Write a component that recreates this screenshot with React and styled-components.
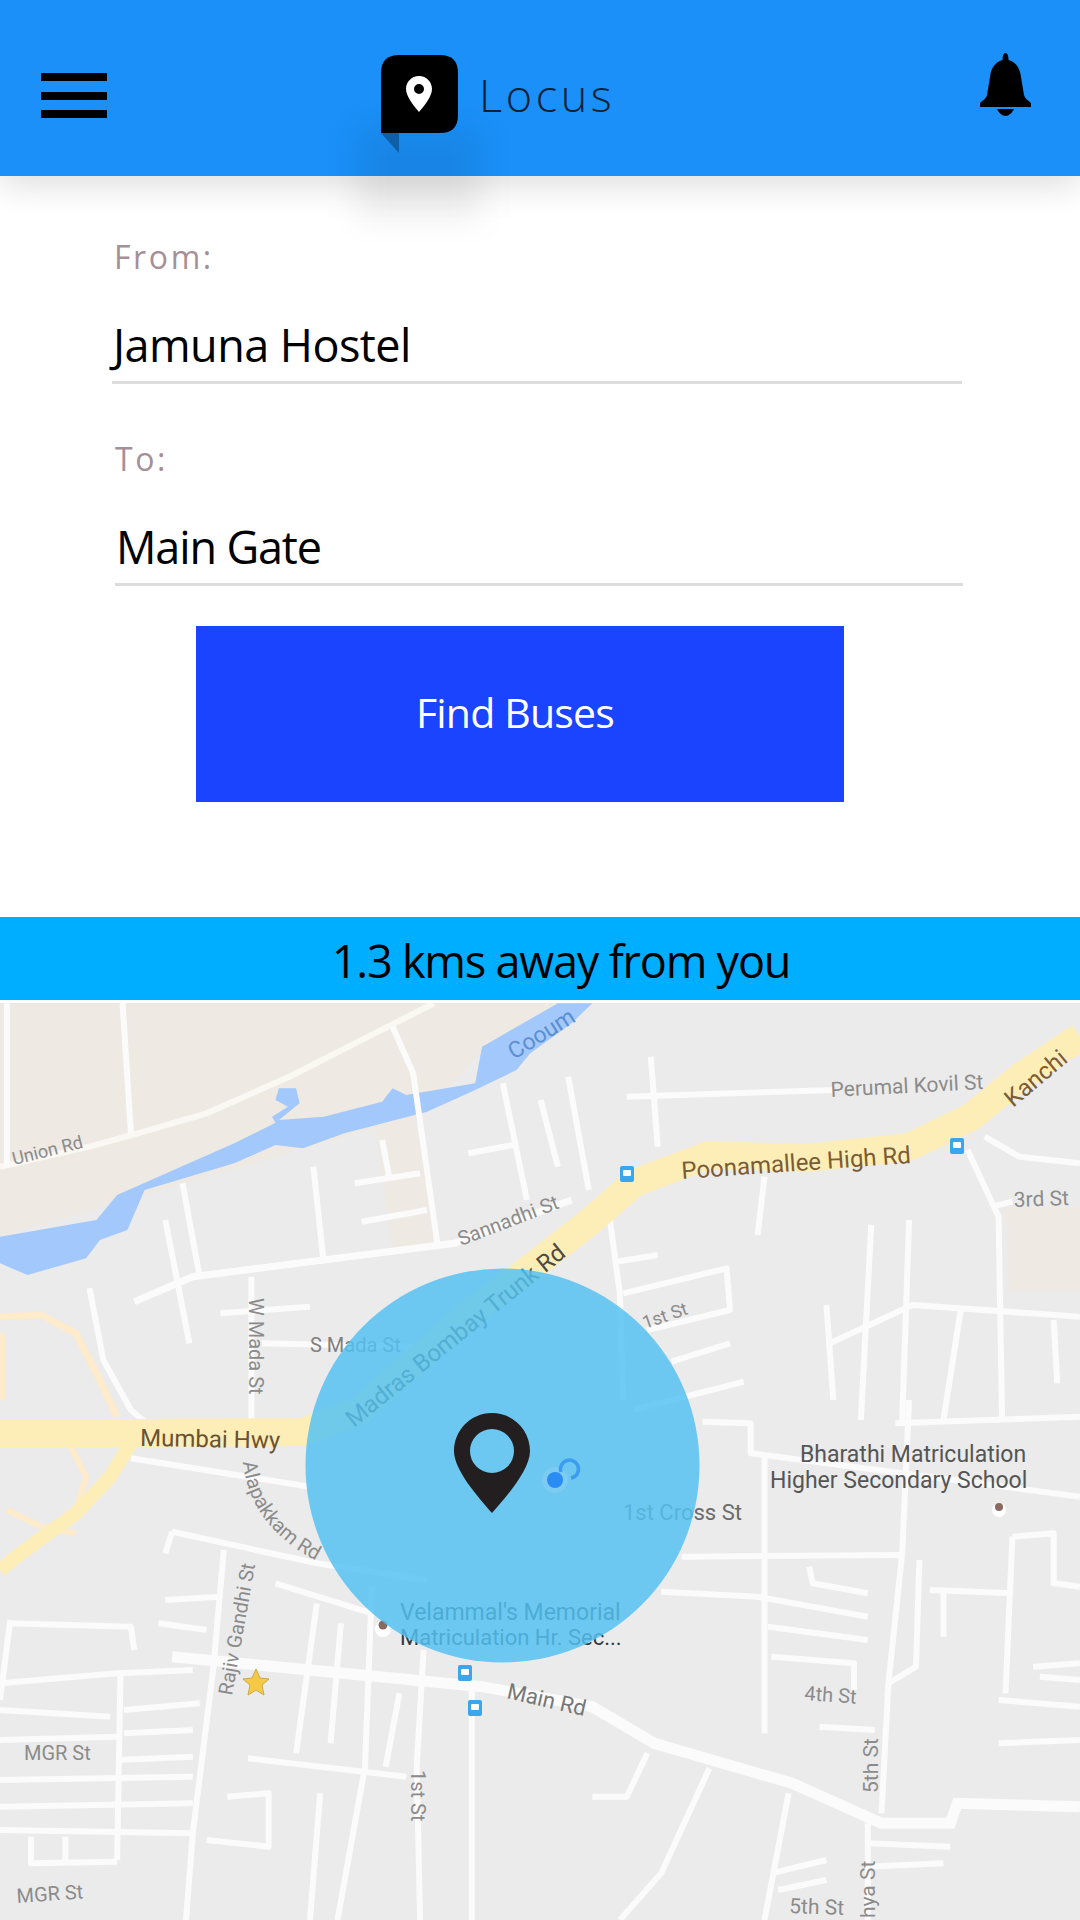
import React from 'react';
import styled, { createGlobalStyle } from 'styled-components';

const GlobalStyle = createGlobalStyle`
  html, body { margin: 0; padding: 0; background: #fff; }
  * { box-sizing: border-box; }
`;

const Page = styled.div`
  width: 1080px;
  height: 1920px;
  overflow: hidden;
  display: flex;
  flex-direction: column;
  background: #fff;
  font-family: "Open Sans", "Noto Sans", sans-serif;
`;

const Header = styled.header`
  position: relative;
  flex: none;
  height: 176px;
  padding: 55px 49px 0 41px;
  display: flex;
  align-items: flex-start;
  background: #1a90f8;
  box-shadow: 0 8px 34px rgba(0, 0, 0, 0.14);
  z-index: 2;
`;

const Burger = styled.div`
  width: 66px;
  margin: 18px 274px 0 0;
  display: flex;
  flex-direction: column;
  gap: 10.5px;
`;

const BurgerBar = styled.span`
  display: block;
  height: 8px;
  background: #000;
`;

const Brand = styled.div`
  position: relative;
  display: flex;
  align-items: flex-start;
  gap: 21px;
`;

const BrandShadow = styled.div`
  position: absolute;
  left: -24px;
  top: 72px;
  width: 124px;
  height: 90px;
  background: rgba(0, 0, 0, 0.07);
  filter: blur(16px);
`;

const BrandMark = styled.svg`
  position: relative;
  display: block;
  flex: none;
`;

const BrandName = styled.span`
  font-size: 45px;
  line-height: 60px;
  margin-top: 10px;
  font-weight: 300;
  letter-spacing: 3.6px;
  color: #0f2138;
`;

const Bell = styled.svg`
  display: block;
  margin: -2px 0 0 auto;
`;

const Form = styled.section`
  flex: none;
  height: 741px;
  padding-top: 59px;
  display: flex;
  flex-direction: column;
`;

const Field = styled.div`
  width: ${(p) => p.$width}px;
  margin: 0 0 ${(p) => p.$gap}px ${(p) => p.$left}px;
  height: ${(p) => p.$height}px;
  border-bottom: 3px solid #dcdcdc;
`;

const Label = styled.div`
  font-size: 32px;
  line-height: 44px;
  letter-spacing: 2.6px;
  color: #a78f97;
  padding-left: ${(p) => p.$pad}px;
`;

const Value = styled.div`
  margin-top: 36px;
  font-size: 45px;
  line-height: 60px;
  letter-spacing: ${(p) => p.$spacing}px;
  color: #000;
  padding-left: ${(p) => p.$pad}px;
`;

const FindButton = styled.button`
  width: 648px;
  height: 176px;
  margin-left: 196px;
  padding: 0 10px 5px 0;
  border: 0;
  border-radius: 0;
  background: #1a44ff;
  color: #fff;
  font-family: inherit;
  font-size: 41px;
  letter-spacing: -0.8px;
`;

const Banner = styled.div`
  flex: none;
  height: 83px;
  margin-bottom: 3px;
  padding: 4px 0 0 42px;
  display: flex;
  align-items: center;
  justify-content: center;
  background: #00aeff;
  color: #000;
  font-size: 45px;
  letter-spacing: -1.2px;
`;

const MapFrame = styled.div`
  flex: 1;
  min-height: 0;
`;

const MapSvg = styled.svg`
  display: block;
  font-family: Roboto, "Liberation Sans", sans-serif;
`;

// points were read off two crops, x is stretched by 1.452 and y by 3
const toPath = (pts, y0) =>
  'M' + pts.map(([x, y]) => `${(x / 1.452).toFixed(1)} ${(y0 + y / 3).toFixed(1)}`).join(' L');

const ROADS_TOP = [
  [[178, 310], [190, 700]],
  [[10, 310], [10, 800]],
  [[570, 380], [600, 520], [635, 1030]],
  [[945, 470], [955, 740]],
  [[910, 590], [1210, 570]],
  [[825, 530], [855, 870]],
  [[730, 550], [765, 900]],
  [[785, 600], [810, 800]],
  [[680, 760], [745, 735]],
  [[555, 720], [565, 830]],
  [[515, 850], [610, 820]],
  [[455, 800], [470, 1090]],
  [[525, 965], [620, 930]],
  [[265, 850], [290, 1130]],
  [[240, 960], [275, 1330]],
  [[365, 1130], [365, 1560]],
  [[130, 1165], [150, 1380], [190, 1530], [230, 1600]],
  [[320, 1240], [450, 1220]],
  [[380, 1330], [600, 1340]],
  [[885, 950], [900, 1180], [905, 1500]],
  [[1110, 830], [1100, 1005]],
  [[895, 1085], [955, 1065]],
  [[905, 1180], [1055, 1105], [1060, 1230], [940, 1290]],
  [[975, 1385], [1060, 1330]],
  [[920, 1530], [1080, 1445]],
  [[1430, 710], [1480, 770], [1568, 790]],
  [[1405, 750], [1450, 950], [1455, 1560]],
  [[1440, 920], [1470, 905]],
  [[1265, 975], [1250, 1560]],
  [[1320, 960], [1310, 1560]],
  [[1200, 1215], [1210, 1500]],
  [[1205, 1330], [1325, 1215], [1568, 1250]],
  [[1395, 1230], [1370, 1560]],
  [[1530, 1260], [1535, 1450]],
];

const ROADS_BOTTOM = [
  [[190, 175], [450, 260]],
  [[250, 395], [240, 460]],
  [[250, 395], [460, 490], [620, 540]],
  [[400, 550], [540, 640]],
  [[325, 450], [310, 800], [280, 1300], [270, 1560]],
  [[240, 600], [320, 590]],
  [[230, 670], [300, 690]],
  [[685, 850], [685, 1560]],
  [[615, 750], [605, 1100], [610, 1560]],
  [[540, 560], [530, 1100], [490, 1560]],
  [[460, 610], [430, 1060]],
  [[495, 670], [480, 1030]],
  [[0, 850], [170, 820], [280, 810]],
  [[175, 820], [170, 1380]],
  [[10, 670], [190, 680], [195, 750]],
  [[15, 660], [0, 900]],
  [[180, 930], [290, 910]],
  [[180, 1000], [280, 990]],
  [[170, 1080], [280, 1070]],
  [[0, 1140], [280, 1130]],
  [[0, 1290], [280, 1300]],
  [[0, 1220], [280, 1210]],
  [[0, 1020], [170, 1010]],
  [[0, 930], [160, 950]],
  [[45, 1310], [45, 1390], [170, 1385]],
  [[95, 1310], [95, 1390]],
  [[360, 1075], [590, 1130]],
  [[330, 1190], [390, 1180], [390, 1340], [300, 1320]],
  [[465, 1180], [450, 1560]],
  [[580, 880], [560, 1100]],
  [[940, 1060], [910, 1190], [860, 1190]],
  [[1030, 1105], [960, 1420], [900, 1560]],
  [[1145, 1180], [1110, 1560]],
  [[1020, 65], [1090, 70], [1090, 160], [1568, 290]],
  [[1300, 70], [1568, 50]],
  [[990, 470], [1310, 465]],
  [[960, 575], [1100, 590], [1260, 650]],
  [[1110, 170], [1110, 1000]],
  [[1120, 770], [1240, 790], [1240, 870]],
  [[1115, 680], [1260, 720]],
  [[1175, 500], [1180, 550], [1260, 580]],
  [[1320, 0], [1310, 460], [1290, 850], [1280, 1240]],
  [[1335, 480], [1330, 800], [1290, 850]],
  [[1350, 570], [1470, 580]],
  [[1470, 410], [1530, 400], [1530, 550], [1568, 560]],
  [[1470, 410], [1460, 880]],
  [[1370, 570], [1370, 710]],
  [[1450, 900], [1568, 920]],
  [[1500, 800], [1568, 790]],
  [[1510, 830], [1568, 840]],
  [[1450, 1030], [1568, 1020]],
  [[1190, 980], [1270, 990]],
  [[1260, 1270], [1260, 1560]],
  [[1260, 1330], [1380, 1340]],
  [[1260, 1400], [1370, 1390]],
  [[1120, 1420], [1200, 1380]],
  [[1130, 1470], [1200, 1440]],
];

const LABELS = [
  { t: 'Union Rd', x: 14, y: 1165, r: -14, s: 18, c: '#8b8b8b' },
  { t: 'Cooum', x: 514, y: 1060, r: -32, s: 23, c: '#5b8fd2' },
  { t: 'Perumal Kovil St', x: 831, y: 1097, r: -3, s: 21, c: '#8b8b8b' },
  { t: 'Kanchi', x: 1013, y: 1108, r: -40, s: 24, c: '#7a5c36' },
  { t: 'Poonamallee High Rd', x: 682, y: 1179, r: -4, s: 24, c: '#7a5c36' },
  { t: 'Sannadhi St', x: 461, y: 1246, r: -21, s: 20, c: '#8b8b8b' },
  { t: '3rd St', x: 1014, y: 1207, r: -2, s: 21, c: '#8b8b8b' },
  { t: 'Madras Bombay Trunk Rd', x: 354, y: 1428, r: -39, s: 24, c: '#4c4b42' },
  { t: 'S Mada St', x: 310, y: 1352, r: 0, s: 20, c: '#808080' },
  { t: 'W Mada St', x: 249, y: 1298, r: 90, s: 20, c: '#8b8b8b' },
  { t: '1st St', x: 645, y: 1329, r: -19, s: 18, c: '#8b8b8b' },
  { t: 'Mumbai Hwy', x: 140, y: 1446, r: 1, s: 24, c: '#6b5232' },
  { t: 'Rajiv Gandhi St', x: 232, y: 1696, r: -80, s: 20, c: '#8b8b8b' },
  { t: '1st Cross St', x: 623, y: 1520, r: 0, s: 22, c: '#6a6a6a' },
  { t: 'Bharathi Matriculation', x: 800, y: 1462, r: 0, s: 23, c: '#555' },
  { t: 'Higher Secondary School', x: 770, y: 1488, r: 0, s: 23, c: '#555' },
  { t: "Velammal's Memorial", x: 400, y: 1620, r: 0, s: 23, c: '#2f3a42' },
  { t: 'Matriculation Hr. Sec...', x: 400, y: 1645, r: 0, s: 22, c: '#2f3a42' },
  { t: 'Main Rd', x: 506, y: 1698, r: 13, s: 22, c: '#777' },
  { t: '4th St', x: 804, y: 1700, r: 4, s: 20, c: '#8b8b8b' },
  { t: 'MGR St', x: 24, y: 1760, r: 0, s: 20, c: '#8b8b8b' },
  { t: 'MGR St', x: 17, y: 1903, r: -4, s: 20, c: '#8b8b8b' },
  { t: '1st St', x: 411, y: 1770, r: 90, s: 20, c: '#8b8b8b' },
  { t: '5th St', x: 878, y: 1793, r: -90, s: 21, c: '#8b8b8b' },
  { t: '5th St', x: 789, y: 1913, r: 2, s: 21, c: '#8b8b8b' },
  { t: 'hya St', x: 875, y: 1918, r: -90, s: 21, c: '#8b8b8b' },
];

const BUS_STOPS = [[627, 1174], [957, 1146], [465, 1673], [475, 1708]];

const Roads = ({ list, y0 }) =>
  list.map((pts, i) => (
    <path key={i} d={toPath(pts, y0)} fill="none" stroke="#fbfbfb" strokeWidth="6" strokeLinejoin="round" />
  ));

const BusStop = ({ x, y }) => (
  <g>
    <rect x={x - 7} y={y - 8} width="14" height="16" rx="2" fill="#39a6ee" />
    <rect x={x - 4} y={y - 4} width="8" height="6" rx="1" fill="#fff" />
  </g>
);

const MapView = () => (
  <MapSvg width="1080" height="917" viewBox="0 1003 1080 917">
    <rect x="0" y="1003" width="1080" height="917" fill="#ebebeb" />

    <path d={toPath([[0, 310], [860, 310], [700, 450], [620, 640], [0, 1010]], 900)} fill="#eee9e3" />
    <path d={toPath([[600, 640], [640, 1030], [570, 1050], [545, 690]], 900)} fill="#eee9e3" />
    <path d={toPath([[1460, 920], [1568, 920], [1568, 1170], [1465, 1170]], 900)} fill="#eee9e3" />

    <path
      d={toPath([[810, 310], [860, 310], [830, 370], [770, 460], [750, 510], [690, 570], [620, 635], [500, 700], [440, 745], [400, 735], [340, 790], [210, 870], [185, 990], [145, 1020], [125, 1075], [40, 1125], [0, 1090], [0, 1010], [140, 960], [170, 885], [340, 730], [400, 668], [395, 650], [418, 620], [400, 600], [405, 565], [430, 565], [435, 610], [405, 660], [470, 650], [555, 605], [570, 565], [590, 585], [690, 550], [700, 440]], 900)}
      fill="#a3c8fb"
    />

    <path d={toPath([[0, 800], [130, 740], [200, 700], [300, 640], [420, 530], [630, 310]], 900)} fill="none" stroke="#faf8f2" strokeWidth="6" />
    <Roads list={ROADS_TOP} y0={900} />
    <Roads list={ROADS_BOTTOM} y0={1400} />
    <path d={toPath([[195, 1205], [280, 1130], [660, 1030], [830, 900]], 900)} fill="none" stroke="#fbfbfb" strokeWidth="7" />
    <path d={toPath([[250, 770], [600, 840], [700, 860], [860, 920], [950, 1030], [1150, 1150], [1280, 1270], [1380, 1270], [1390, 1210], [1568, 1220]], 1400)} fill="none" stroke="#fbfbfb" strokeWidth="11" />

    <path d={toPath([[0, 1250], [60, 1245], [110, 1300], [140, 1420], [170, 1550]], 900)} fill="none" stroke="#fdebcb" strokeWidth="7" />
    <path d={toPath([[0, 1500], [0, 1300]], 900)} fill="none" stroke="#fdebcb" strokeWidth="10" />
    <path d={toPath([[100, 130], [125, 230], [110, 330]], 1400)} fill="none" stroke="#fdebcb" strokeWidth="6" />
    <path d={toPath([[10, 330], [60, 380], [110, 400]], 1400)} fill="none" stroke="#fdebcb" strokeWidth="6" />
    <path d={toPath([[190, 130], [160, 230], [110, 340], [30, 460], [0, 510]], 1400)} fill="none" stroke="#fdeeb8" strokeWidth="14" />
    <path
      d="M1080 1037 L1020 1077 L971 1117 L909 1147 L806 1158 L709 1155 L634 1183 L592 1220 L537 1263 L470 1313 L413 1363 L360 1410 L303 1432 L138 1433 L0 1433"
      fill="none"
      stroke="#fdeeb8"
      strokeWidth="28"
      strokeLinejoin="round"
    />

    {LABELS.map((l, i) => (
      <text key={i} x={l.x} y={l.y} fontSize={l.s} fill={l.c} transform={`rotate(${l.r} ${l.x} ${l.y})`}>
        {l.t}
      </text>
    ))}
    <path id="alapakkam" d="M243 1462 Q250 1530 325 1565" fill="none" />
    <text fontSize="20" fill="#8b8b8b">
      <textPath href="#alapakkam">Alapakkam Rd</textPath>
    </text>

    {BUS_STOPS.map(([x, y]) => (
      <BusStop key={`${x}-${y}`} x={x} y={y} />
    ))}

    <path d="M256 1669 L260 1678 L269 1679 L262 1685 L264 1695 L256 1690 L248 1695 L250 1685 L243 1679 L252 1678 Z" fill="#f6c945" stroke="#c9a94a" />
    <circle cx="999" cy="1510" r="7" fill="#fff" />
    <circle cx="999" cy="1507" r="4" fill="#8a6a60" />
    <circle cx="383" cy="1629" r="8" fill="#fff" />
    <circle cx="383" cy="1625" r="4.5" fill="#8a6a60" />

    <circle cx="502.5" cy="1465.5" r="197" fill="#53c1f1" fillOpacity="0.84" />

    <circle cx="555" cy="1480" r="13" fill="#7ccbf3" />
    <circle cx="555" cy="1480" r="8" fill="#2a8cf2" />
    <path d="M561 1472 A9 9 0 1 1 571 1478" fill="none" stroke="#3c9df0" strokeWidth="3.5" />

    <path
      fillRule="evenodd"
      d="M492 1413 C470 1413 454 1431 454 1451 C454 1470 478 1497 492 1513 C506 1497 530 1470 530 1451 C530 1431 514 1413 492 1413 Z M492 1429 A22 22 0 1 1 492 1473 A22 22 0 1 1 492 1429 Z"
      fill="#231f20"
    />
  </MapSvg>
);

const App = () => (
  <>
    <GlobalStyle />
    <Page>
      <Header>
        <Burger>
          <BurgerBar />
          <BurgerBar />
          <BurgerBar />
        </Burger>
        <Brand>
          <BrandShadow />
          <BrandMark width="77" height="99" viewBox="0 0 77 99">
            <path d="M0 18 Q0 0 18 0 L59 0 Q77 0 77 18 L77 60 Q77 78 59 78 L0 78 Z" fill="#000" />
            <path d="M0 78 L18 78 L18 98 Z" fill="#0f5fa6" />
            <path
              fillRule="evenodd"
              d="M38 21 C30.5 21 25 27 25 34 C25 41 32 50 38 57 C44 50 51 41 51 34 C51 27 45.5 21 38 21 Z M38 29 A5 5 0 1 1 38 39 A5 5 0 1 1 38 29 Z"
              fill="#fff"
            />
          </BrandMark>
          <BrandName>Locus</BrandName>
        </Brand>
        <Bell width="51" height="63" viewBox="0 0 51 63">
          <path
            d="M25.5 0 C27.5 0 28.5 3 28.5 7 C36 9 40 15 41 24 L44 42 C45 46 48 47 51 50 L51 54 L0 54 L0 50 C3 47 6 46 7 42 L10 24 C11 15 15 9 22.5 7 C22.5 3 23.5 0 25.5 0 Z M17 56 L34 56 C32 60 29 63 25.5 63 C22 63 19 60 17 56 Z"
            fill="#000"
          />
        </Bell>
      </Header>

      <Form>
        <Field $left={112} $width={850} $gap={53} $height={149}>
          <Label $pad={2}>From:</Label>
          <Value $pad={1} $spacing={-0.55}>Jamuna Hostel</Value>
        </Field>
        <Field $left={115} $width={848} $gap={40} $height={149}>
          <Label $pad={0}>To:</Label>
          <Value $pad={1} $spacing={-1.15}>Main Gate</Value>
        </Field>
        <FindButton type="button">Find Buses</FindButton>
      </Form>

      <Banner>1.3 kms away from you</Banner>

      <MapFrame>
        <MapView />
      </MapFrame>
    </Page>
  </>
);

export default App;
